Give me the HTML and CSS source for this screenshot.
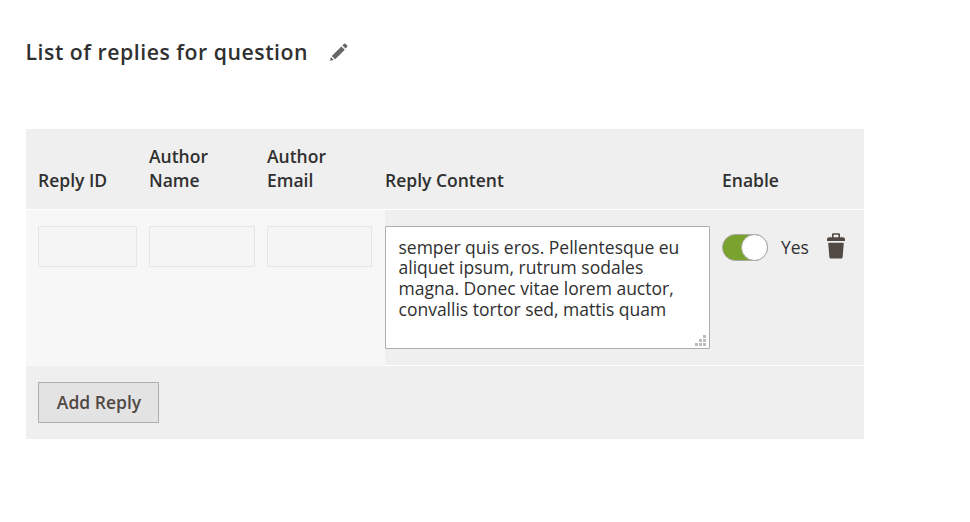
FILE: index.html
```
<!DOCTYPE html>
<html lang="en">
<head>
<meta charset="utf-8">
<title>List of replies for question</title>
<link rel="stylesheet" href="styles.css">
</head>
<body>
<main class="page">
  <header class="title">
    <h1>List of replies for question</h1>
    <svg class="pencil" width="18" height="18" viewBox="0 0 18 18"><path d="M0 17.8 .9 14 3.8 16.9Z M1.8 12.9 11.4 3.4 14.8 6.8 5.2 16.2Z M12.4 2.4 14.1.8Q14.8.3 15.4.8L17.2 2.6Q17.7 3.2 17.2 3.8L15.7 5.6Z"/></svg>
  </header>
  <section class="table">
    <div class="row head">
      <div>Reply ID</div>
      <div>Author<br>Name</div>
      <div>Author<br>Email</div>
      <div>Reply Content</div>
      <div>Enable</div>
    </div>
    <div class="row body">
      <div class="off"><input class="field" disabled></div>
      <div class="off"><input class="field" disabled></div>
      <div class="off last"><input class="field" disabled></div>
      <div class="cell">
        <div class="content">semper quis eros. Pellentesque eu<br>aliquet ipsum, rutrum sodales<br>magna. Donec vitae lorem auctor,<br>convallis tortor sed, mattis quam
          <svg class="grip" width="11" height="11"><path d="M8 0h3v3h-3zM4 4h3v3h-3zM8 4h3v3h-3zM0 8h3v3h-3zM4 8h3v3h-3zM8 8h3v3h-3z"/></svg>
        </div>
      </div>
      <div class="cell actions">
        <span class="switch"></span>
        <span class="yes">Yes</span>
        <svg class="trash" width="18" height="26" viewBox="0 0 18 26"><path fill-rule="evenodd" d="M0 6.6Q0 4.3 2 4.3H5V1.3Q5 .2 6.2 .2H11.8Q13 .2 13 1.3V4.3H16Q18 4.3 18 6.6V8H0Z M6.6 1.7V4.3H11.4V1.7Z M1.2 9.7H16.8L15.6 24.3Q15.5 25.5 14.4 25.5H3.6Q2.5 25.5 2.4 24.3Z"/></svg>
      </div>
    </div>
    <div class="foot"><button class="add">Add Reply</button></div>
  </section>
</main>
</body>
</html>
```
FILE: styles.css
```
* { box-sizing: border-box; }
body {
  margin: 0;
  background: #fff;
  color: #303030;
  font-family: "Open Sans", sans-serif;
  font-size: 17.5px;
}
.page { width: 864px; padding: 36px 0 0 25.5px; }
.title { display: flex; height: 93px; align-items: flex-start; }
h1 {
  margin: 0;
  width: 304.5px;
  font-size: 21.25px;
  line-height: 32px;
  font-weight: 600;
  letter-spacing: .52px;
  white-space: nowrap;
}
.pencil { margin-top: 7px; fill: #666; }
.table { margin-left: .5px; background: #efefef; }
.row {
  display: grid;
  grid-template-columns: 123px 118px 118px 337px 142px;
  border-bottom: 1px solid #fff;
}
.row > :first-child { padding-left: 12px; }
.head {
  height: 81px;
  padding-bottom: 17px;
  align-items: end;
  font-weight: 600;
  line-height: 24px;
}
.body { height: 156px; }
.off { background: #f7f7f7; padding: 16px 12px 0 0; margin-bottom: -1px; }
.off.last { padding-right: 13px; }
.field {
  display: block;
  width: 100%;
  height: 41px;
  background: #f5f5f5;
  border: 1px solid #e5e5e5;
  border-radius: 1px;
}
.cell { padding-top: 16px; }
.content {
  position: relative;
  width: 325px;
  height: 123px;
  padding: 9.5px 12.5px;
  background: #fff;
  border: 1px solid #adadad;
  border-radius: 1px;
  line-height: 20.7px;
  white-space: nowrap;
}
.grip { position: absolute; right: 3px; bottom: 2px; fill: #bdbdbd; }
.actions { display: flex; align-items: flex-start; }
.switch {
  width: 46px;
  height: 27px;
  margin-top: 8px;
  display: flex;
  justify-content: flex-end;
  background: #79a22e;
  border: 1px solid #aaa6a0;
  border-radius: 14px;
}
.switch::after {
  content: "";
  width: 25px;
  height: 25px;
  margin: -1px -1px 0 0;
  background: #fff;
  border: 1px solid #aaa6a0;
  border-radius: 50%;
}
.yes { margin: 9px 0 0 13px; width: 46px; line-height: 24px; }
.trash { margin-top: 7px; fill: #514943; }
.foot { height: 73px; padding: 16px 12px; }
.add {
  display: block;
  width: 121px;
  height: 41px;
  padding: 0 0 2px 1px;
  font: 600 17.5px/24px "Open Sans", sans-serif;
  color: #514943;
  background: #e3e3e3;
  border: 1px solid #adadad;
}
```
